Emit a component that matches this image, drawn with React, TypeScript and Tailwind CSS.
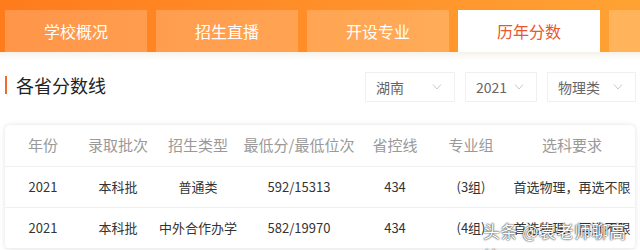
import React from 'react';

const tabs = ['学校概况', '招生直播', '开设专业', '历年分数', ''];

const cols = ['w-[76px]', 'w-[74px]', 'w-[86px]', 'w-[116px]', 'w-[76px]', 'w-[76px]', 'w-[126px]'];

const header = ['年份', '录取批次', '招生类型', '最低分/最低位次', '省控线', '专业组', '选科要求'];

const rows = [
  ['2021', '本科批', '普通类', '592/15313', '434', '(3组)', '首选物理，再选不限'],
  ['2021', '本科批', '中外合作办学', '582/19970', '434', '(4组)', '首选物理，再选不限'],
];

const Chevron = () => (
  <svg width="10" height="6" viewBox="0 0 10 6" fill="none" stroke="#c8c8c8" strokeWidth="1">
    <path d="M1 0.5 L5 5 L9 0.5" />
  </svg>
);

const Select = ({ label, width }: { label: string; width: string }) => (
  <div className={`${width} h-[30px] flex items-center justify-between pl-[10px] pr-[12px] border border-[#f0f0f0] text-[14px] text-[#666]`}>
    <span>{label}</span>
    <Chevron />
  </div>
);

export default function App() {
  return (
    <div
      className="relative w-[640px] h-[250px] overflow-hidden bg-white"
      style={{ fontFamily: '"Noto Sans CJK SC", "Noto Sans", sans-serif' }}
    >
      {/* tab bar */}
      <div className="h-[52px] bg-gradient-to-r from-[#ff7b1c] to-[#ffa234] flex items-end gap-[9px] pl-[5px]">
        {tabs.map((t, i) => (
          <div
            key={i}
            className={`w-[142px] h-[42px] shrink-0 flex items-center justify-center text-[16px] ${
              i === 3 ? 'bg-white text-[#e9572b]' : 'bg-white/20 text-white'
            }`}
          >
            {t}
          </div>
        ))}
      </div>
      <div className="h-[8px] bg-gradient-to-b from-[#f6f2ea] to-white" />

      {/* title + filters */}
      <div className="flex items-center justify-between h-[46px] mt-[4px] pl-[5px] pr-[4px]">
        <div className="flex items-center -mt-[4px]">
          <div className="w-[2px] h-[18px] bg-[#f26b2b]" />
          <span className="ml-[9px] text-[18px] text-[#222]">各省分数线</span>
        </div>
        <div className="flex gap-[10px]">
          <Select label="湖南" width="w-[90px]" />
          <Select label="2021" width="w-[72px]" />
          <Select label="物理类" width="w-[89px]" />
        </div>
      </div>

      {/* table */}
      <div className="mx-[5px] mt-[15px] rounded-[5px] bg-white shadow-[0_0_5px_rgba(0,0,0,0.12)]">
        <div className="flex h-[42px] items-center border-b border-[#f0f0f0] text-[15px] text-[#999]">
          {header.map((h, i) => (
            <div key={i} className={`${cols[i]} text-center`}>
              {h}
            </div>
          ))}
        </div>
        {rows.map((r, ri) => (
          <div key={ri} className="flex h-[41px] items-center border-b border-[#f0f0f0] text-[13px] text-[#333]">
            {r.map((c, i) => (
              <div key={i} className={`${cols[i]} text-center`}>
                {c}
              </div>
            ))}
          </div>
        ))}
      </div>

      {/* watermark */}
      <div
        className="absolute left-[483px] top-[218px] text-[17px] text-white tracking-[0.5px]"
        style={{ textShadow: '0 0 2px #333, 0 0 1px #333' }}
      >
        头条 @袁老师聊高校
      </div>
    </div>
  );
}
